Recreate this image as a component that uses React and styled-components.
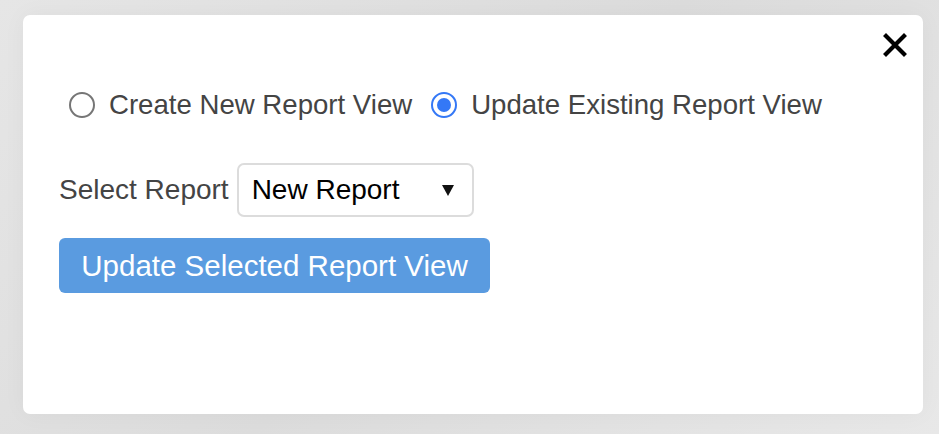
import React, { useState } from "react";
import styled, { createGlobalStyle } from "styled-components";

const GlobalStyle = createGlobalStyle`
  html, body {
    margin: 0;
    padding: 0;
  }
  body {
    width: 939px;
    height: 434px;
    overflow: hidden;
    background: linear-gradient(135deg, #e6e6e6 0%, #dcdcdc 50%, #e8e8e8 100%);
    font-family: "Liberation Sans", Arial, sans-serif;
  }
`;

const Backdrop = styled.div`
  padding: 15px 16px 20px 23px;
  box-sizing: border-box;
  height: 434px;
`;

const Modal = styled.div`
  position: relative;
  width: 900px;
  height: 399px;
  box-sizing: border-box;
  background: #fff;
  border-radius: 7px;
  padding: 74px 36px 0 36px;
  box-shadow: 0 0 24px rgba(0, 0, 0, 0.04);
`;

const Close = styled.button`
  position: absolute;
  top: 18px;
  right: 16px;
  width: 24px;
  height: 24px;
  padding: 0;
  border: 0;
  background: none;
  cursor: pointer;
`;

const RadioRow = styled.div`
  display: flex;
  align-items: center;
  gap: 19px;
  margin-left: 10px;
`;

const RadioLabel = styled.label`
  display: flex;
  align-items: center;
  gap: 14px;
  font-size: 27.6px;
  color: #444;
  cursor: pointer;
`;

const RadioDot = styled.span`
  width: 26px;
  height: 26px;
  box-sizing: border-box;
  border-radius: 50%;
  border: 2px solid ${(p) => (p.checked ? "#3478f6" : "#767676")};
  display: flex;
  align-items: center;
  justify-content: center;

  &::after {
    content: "";
    width: 14px;
    height: 14px;
    border-radius: 50%;
    background: ${(p) => (p.checked ? "#3478f6" : "transparent")};
  }
`;

const SelectRow = styled.div`
  display: flex;
  align-items: center;
  gap: 8px;
  margin-top: 42px;
`;

const FieldLabel = styled.span`
  font-size: 28px;
  color: #444;
`;

const SelectBox = styled.div`
  width: 237px;
  height: 54px;
  box-sizing: border-box;
  border: 2px solid #dcdcdc;
  border-radius: 7px;
  display: flex;
  align-items: center;
  justify-content: space-between;
  padding: 0 18px 0 13px;
  font-size: 28px;
  color: #000;
`;

const Caret = styled.span`
  width: 0;
  height: 0;
  border-left: 6px solid transparent;
  border-right: 6px solid transparent;
  border-top: 11px solid #111;
`;

const PrimaryButton = styled.button`
  margin-top: 21px;
  width: 431px;
  height: 55px;
  border: 0;
  border-radius: 6px;
  background: #5a9be0;
  color: #fff;
  font-family: "Liberation Sans", Arial, sans-serif;
  font-size: 29.5px;
  padding: 0;
  cursor: pointer;
`;

export default function App() {
  const [mode, setMode] = useState("update");

  return (
    <>
      <GlobalStyle />
      <Backdrop>
        <Modal>
          <Close aria-label="Close">
            <svg width="24" height="24" viewBox="0 0 24 24">
              <path
                d="M3 3 L21 21 M21 3 L3 21"
                stroke="#000"
                strokeWidth="4.2"
                strokeLinecap="square"
              />
            </svg>
          </Close>
          <RadioRow>
            <RadioLabel onClick={() => setMode("create")}>
              <RadioDot checked={mode === "create"} />
              Create New Report View
            </RadioLabel>
            <RadioLabel onClick={() => setMode("update")}>
              <RadioDot checked={mode === "update"} />
              Update Existing Report View
            </RadioLabel>
          </RadioRow>
          <SelectRow>
            <FieldLabel>Select Report</FieldLabel>
            <SelectBox>
              New Report
              <Caret />
            </SelectBox>
          </SelectRow>
          <PrimaryButton>Update Selected Report View</PrimaryButton>
        </Modal>
      </Backdrop>
    </>
  );
}
